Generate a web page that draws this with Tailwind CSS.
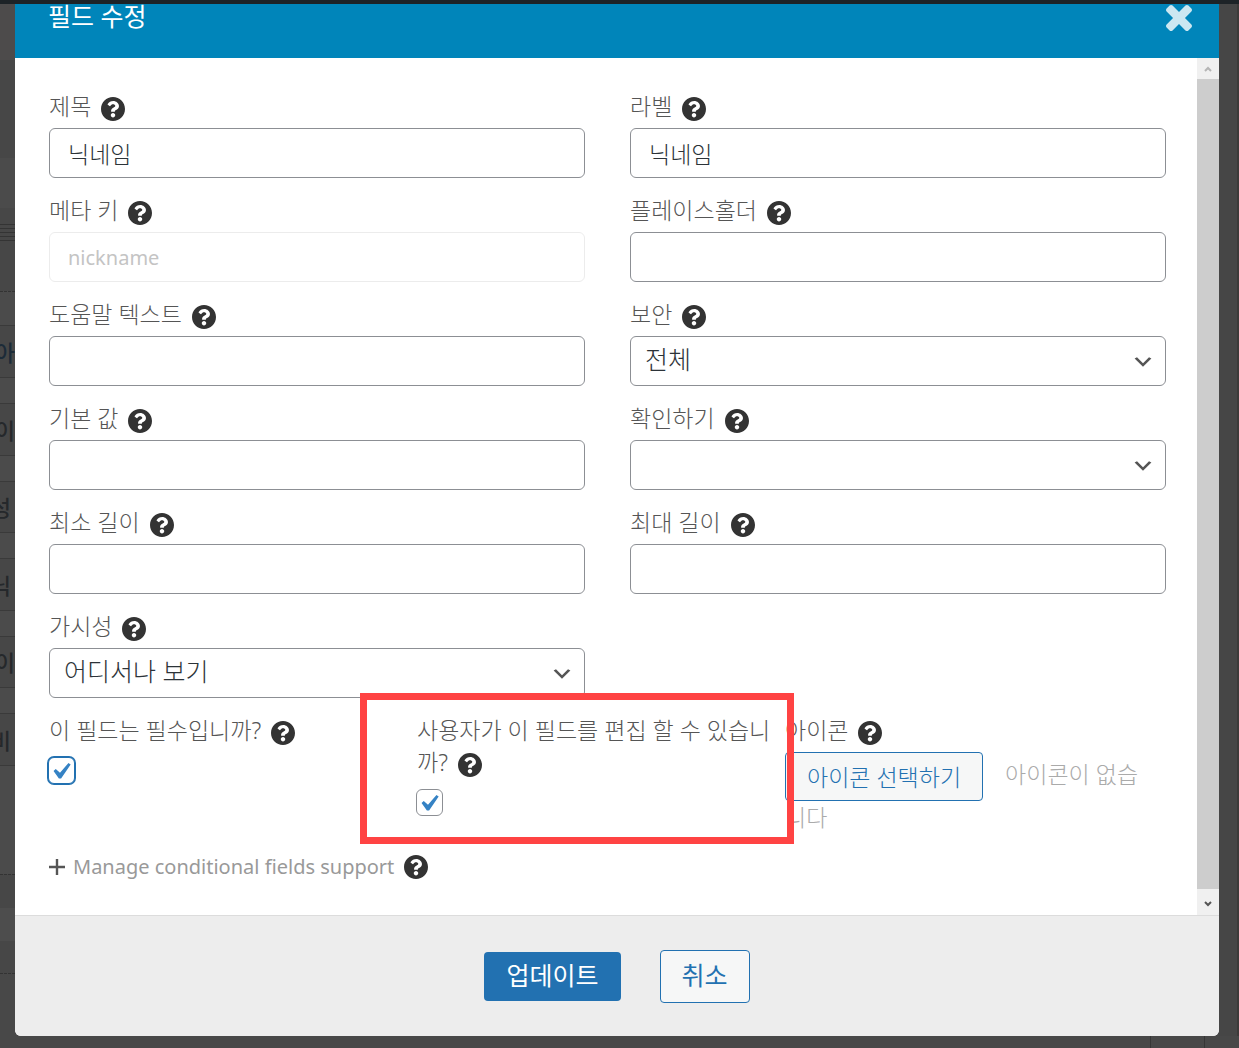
<!DOCTYPE html>
<html lang="ko">
<head>
  <meta charset="UTF-8">
  <meta name="viewport" content="width=device-width, initial-scale=1.0">
  <title>필드 수정</title>
  <script src="https://cdn.jsdelivr.net/npm/@tailwindcss/browser@4"></script>
</head>
<body class="min-h-screen overflow-x-hidden bg-[#484848] font-['Noto_Sans','Noto_Sans_CJK_KR',sans-serif] text-[23px] font-light leading-8 text-[#555]">
  <!-- Shared icons -->
  <svg class="hidden">
    <symbol id="help" viewBox="8 8 496 496">
      <path d="M504 256c0 136.997-111.043 248-248 248S8 392.997 8 256C8 119.083 119.043 8 256 8s248 111.083 248 248zM262.655 90c-54.497 0-89.255 22.957-116.549 63.758-3.536 5.286-2.353 12.415 2.715 16.258l34.699 26.31c5.205 3.947 12.621 3.008 16.665-2.122 17.864-22.658 30.113-35.797 57.303-35.797 20.429 0 45.698 13.148 45.698 32.958 0 14.976-12.363 22.667-32.534 33.976C247.128 238.528 216 254.941 216 296v4c0 6.627 5.373 12 12 12h56c6.627 0 12-5.373 12-12v-1.333c0-28.462 83.186-29.647 83.186-106.667 0-58.002-60.165-102-116.531-102zM256 338c-25.365 0-46 20.635-46 46 0 25.364 20.635 46 46 46s46-20.636 46-46c0-25.364-20.635-46-46-46z"/>
    </symbol>
    <symbol id="chevron" viewBox="0 0 20 20">
      <path d="M5 6l5 5 5-5 2 1-7 7-7-7 2-1z"/>
    </symbol>
    <symbol id="check" viewBox="0 0 20 20">
      <path d="M14.83 4.89l1.34.94-5.81 8.38H9.02L5.78 9.67l1.34-1.25 2.57 2.4z"/>
    </symbol>
  </svg>

  <!-- Admin bar -->
  <div class="h-1 bg-[#1d2327]"></div>

  <div class="flex">
    <!-- Dimmed page, left edge -->
    <div class="w-[15px] shrink-0 overflow-hidden text-[22px] font-medium text-[#25282b]">
      <div class="h-14 bg-[#4d4b4b]"></div>
      <div class="h-[98px] bg-[#474747]"></div>
      <div class="h-[50px] bg-[#4b4b4b]"></div>
      <div class="flex h-[83px] flex-col gap-[3px] bg-[#474747] pt-4">
        <div class="h-px bg-[#343434]"></div>
        <div class="h-px bg-[#343434]"></div>
        <div class="h-px bg-[#343434]"></div>
        <div class="h-px bg-[#343434]"></div>
        <div class="h-px bg-[#343434]"></div>
      </div>
      <div class="h-[34px] border-t border-dashed border-[#333] bg-[#4b4b4b]"></div>
      <div class="flex flex-col gap-[25px] bg-[#4b4b4b]">
        <div class="flex h-[53px] items-center justify-end border-y border-[#3a3a3a] bg-[#474747] text-[#1c2b38]">아</div>
        <div class="flex h-[53px] items-center justify-end border-y border-[#3a3a3a] bg-[#474747]">이</div>
        <div class="flex h-[52px] items-center justify-end border-y border-[#3a3a3a] bg-[#474747] pr-1">성</div>
        <div class="flex h-[53px] items-center justify-end border-y border-[#3a3a3a] bg-[#474747] pr-1">닉</div>
        <div class="flex h-[52px] items-center justify-end border-y border-[#3a3a3a] bg-[#474747]">이</div>
        <div class="flex h-[53px] items-center justify-end border-y border-[#3a3a3a] bg-[#474747] pr-1">비</div>
      </div>
      <div class="h-[108px] bg-[#4b4b4b]"></div>
      <div class="h-[34px] border-t border-dashed border-[#333] bg-[#474747]"></div>
      <div class="h-[33px] bg-[#4d4d4d]"></div>
      <div class="h-[33px] border-b border-dashed border-[#333] bg-[#474747]"></div>
    </div>

    <!-- Modal -->
    <div class="min-w-0 flex-1 overflow-hidden rounded-b-md bg-white">
      <header class="flex h-[54px] items-start justify-between bg-[#0085ba] pl-[33px] pr-[27px]">
        <h1 class="-mt-1 text-[25px] font-normal text-white">필드 수정</h1>
        <button type="button" aria-label="닫기" class="mt-px">
          <svg viewBox="302 366 1188 1188" class="size-[26px] fill-[#cce7f1]"><path d="M1490 1322q0 40-28 68l-136 136q-28 28-68 28t-68-28l-294-294-294 294q-28 28-68 28t-68-28l-136-136q-28-28-28-68t28-68l294-294-294-294q-28-28-28-68t28-68l136-136q28-28 68-28t68 28l294 294 294-294q28-28 68-28t68 28l136 136q28 28 28 68t-28 68l-294 294 294 294q28 28 28 68z"/></svg>
        </button>
      </header>

      <div class="flex">
        <form id="fieldForm" class="min-w-0 flex-1 pt-8 pr-[31px] pb-8 pl-[34px]">
          <div class="grid grid-cols-2 gap-x-[45px] gap-y-4">
            <div>
              <label for="title">제목</label><svg class="ml-[10px] inline-block size-6 fill-[#333]"><use href="#help"/></svg>
              <input id="title" type="text" value="닉네임" class="mt-[6px] block h-[50px] w-full rounded-md border border-[#8c8f94] px-[18px] text-[#2c3338]">
            </div>
            <div>
              <label for="fieldLabel">라벨</label><svg class="ml-[10px] inline-block size-6 fill-[#333]"><use href="#help"/></svg>
              <input id="fieldLabel" type="text" value="닉네임" class="mt-[6px] block h-[50px] w-full rounded-md border border-[#8c8f94] px-[18px] text-[#2c3338]">
            </div>
            <div>
              <label for="metaKey">메타 키</label><svg class="ml-[10px] inline-block size-6 fill-[#333]"><use href="#help"/></svg>
              <input id="metaKey" type="text" value="nickname" disabled class="mt-[6px] block h-[50px] w-full rounded-md border border-[#ececec] px-[18px] text-[20px] font-normal text-[#c4c4c4]">
            </div>
            <div>
              <label for="placeholder">플레이스홀더</label><svg class="ml-[10px] inline-block size-6 fill-[#333]"><use href="#help"/></svg>
              <input id="placeholder" type="text" class="mt-[6px] block h-[50px] w-full rounded-md border border-[#8c8f94] px-[18px] text-[#2c3338]">
            </div>
            <div>
              <label for="helpText">도움말 텍스트</label><svg class="ml-[10px] inline-block size-6 fill-[#333]"><use href="#help"/></svg>
              <input id="helpText" type="text" class="mt-[6px] block h-[50px] w-full rounded-md border border-[#8c8f94] px-[18px] text-[#2c3338]">
            </div>
            <div>
              <label for="privacy">보안</label><svg class="ml-[10px] inline-block size-6 fill-[#333]"><use href="#help"/></svg>
              <div class="relative mt-[6px]">
                <select id="privacy" class="block h-[50px] w-full appearance-none rounded-md border border-[#8c8f94] bg-white pr-12 pb-1 pl-[14px] text-[25px] text-[#2c3338]">
                  <option>전체</option>
                </select>
                <svg class="pointer-events-none absolute top-[14px] right-[11px] size-6 fill-[#555]"><use href="#chevron"/></svg>
              </div>
            </div>
            <div>
              <label for="defaultValue">기본 값</label><svg class="ml-[10px] inline-block size-6 fill-[#333]"><use href="#help"/></svg>
              <input id="defaultValue" type="text" class="mt-[6px] block h-[50px] w-full rounded-md border border-[#8c8f94] px-[18px] text-[#2c3338]">
            </div>
            <div>
              <label for="validate">확인하기</label><svg class="ml-[10px] inline-block size-6 fill-[#333]"><use href="#help"/></svg>
              <div class="relative mt-[6px]">
                <select id="validate" class="block h-[50px] w-full appearance-none rounded-md border border-[#8c8f94] bg-white pr-12 pb-1 pl-[14px] text-[25px] text-[#2c3338]">
                  <option></option>
                </select>
                <svg class="pointer-events-none absolute top-[14px] right-[11px] size-6 fill-[#555]"><use href="#chevron"/></svg>
              </div>
            </div>
            <div>
              <label for="minLength">최소 길이</label><svg class="ml-[10px] inline-block size-6 fill-[#333]"><use href="#help"/></svg>
              <input id="minLength" type="text" class="mt-[6px] block h-[50px] w-full rounded-md border border-[#8c8f94] px-[18px] text-[#2c3338]">
            </div>
            <div>
              <label for="maxLength">최대 길이</label><svg class="ml-[10px] inline-block size-6 fill-[#333]"><use href="#help"/></svg>
              <input id="maxLength" type="text" class="mt-[6px] block h-[50px] w-full rounded-md border border-[#8c8f94] px-[18px] text-[#2c3338]">
            </div>
            <div>
              <label for="visibility">가시성</label><svg class="ml-[10px] inline-block size-6 fill-[#333]"><use href="#help"/></svg>
              <div class="relative mt-[6px]">
                <select id="visibility" class="block h-[50px] w-full appearance-none rounded-md border border-[#8c8f94] bg-white pr-12 pb-1 pl-[14px] text-[25px] text-[#2c3338]">
                  <option>어디서나 보기</option>
                </select>
                <svg class="pointer-events-none absolute top-[14px] right-[11px] size-6 fill-[#555]"><use href="#chevron"/></svg>
              </div>
            </div>
          </div>

          <div class="mt-4 mr-[13px] grid grid-cols-3">
            <div>
              <label for="required">이 필드는 필수입니까?</label><svg class="ml-[10px] inline-block size-6 fill-[#333]"><use href="#help"/></svg>
              <div class="relative mt-[11px] -ml-px size-[27px]">
                <input id="required" type="checkbox" checked class="block size-full appearance-none rounded-md border border-[#2271b1] bg-white ring-1 ring-[#2271b1]">
                <svg class="pointer-events-none absolute -top-[2px] -left-1 size-[33px] fill-[#3582c4]"><use href="#check"/></svg>
              </div>
            </div>
            <div class="relative">
              <label for="editable">사용자가 이 필드를 편집 할 수 있습니까?</label><svg class="ml-[10px] inline-block size-6 fill-[#333]"><use href="#help"/></svg>
              <div class="relative mt-[11px] -ml-px size-[27px]">
                <input id="editable" type="checkbox" checked class="block size-full appearance-none rounded-md border border-[#8c8f94] bg-white">
                <svg class="pointer-events-none absolute -top-[2px] -left-1 size-[33px] fill-[#3582c4]"><use href="#check"/></svg>
              </div>
              <!-- Highlight frame -->
              <div class="pointer-events-none absolute -top-[21px] -right-[9px] -left-[57px] z-10 h-[151px] border-[7px] border-[#ff4343]"></div>
            </div>
            <div>
              <label for="icon">아이콘</label><svg class="ml-[10px] inline-block size-6 fill-[#333]"><use href="#help"/></svg>
              <p class="mt-[6px] text-[#aaa]"><button id="icon" type="button" class="mr-[22px] h-[49px] rounded border border-[#2271b1] bg-[#f6f7f7] px-[21px] align-middle text-[#2271b1]">아이콘 선택하기</button>아이콘이 없습니다</p>
            </div>
          </div>

          <div class="mt-[18px] flex items-center text-[20px] text-[#999]">
            <a href="#" class="flex items-center gap-2 font-normal">
              <svg viewBox="0 0 16 16" class="size-4 fill-[#555]"><path d="M6.8 0h2.4v6.8H16v2.4H9.2V16H6.8V9.2H0V6.8h6.8z"/></svg>
              Manage conditional fields support
            </a>
            <svg class="ml-[10px] size-6 fill-[#333]"><use href="#help"/></svg>
          </div>
        </form>

        <!-- Scrollbar -->
        <div class="flex w-[22px] shrink-0 flex-col bg-[#f0f0f0]">
          <div class="flex h-[21px] items-center justify-center">
            <svg viewBox="0 0 8 6" class="h-[6px] w-2 fill-none stroke-[#b5b5b5] stroke-2"><path d="M1 5l3-3 3 3"/></svg>
          </div>
          <div class="flex-1 bg-[#cdcdcd]"></div>
          <div class="flex h-[26px] items-center justify-center pt-1">
            <svg viewBox="0 0 8 6" class="h-[6px] w-2 fill-none stroke-[#555] stroke-2"><path d="M1 1l3 3 3-3"/></svg>
          </div>
        </div>
      </div>

      <footer class="flex items-center justify-center gap-[39px] border-t border-[#dcdcdc] bg-[#ededed] pt-[34px] pb-[33px] text-[25px] font-normal">
        <button type="submit" form="fieldForm" class="h-[49px] rounded bg-[#2271b1] px-[22px] pb-1 text-white">업데이트</button>
        <button type="button" class="h-[53px] rounded border border-[#2271b1] bg-[#f6f7f7] px-[21px] pb-1 text-[#2271b1]">취소</button>
      </footer>
    </div>

    <!-- Dimmed page, right edge -->
    <div class="w-5 shrink-0 border-r-2 border-[#3c3a39] bg-[#464646]"></div>
  </div>

  <!-- Dimmed page, bottom edge -->
  <div class="flex h-3 justify-end pr-[34px]">
    <div class="w-[55px] border-x border-[#363636]"></div>
  </div>
</body>
</html>
